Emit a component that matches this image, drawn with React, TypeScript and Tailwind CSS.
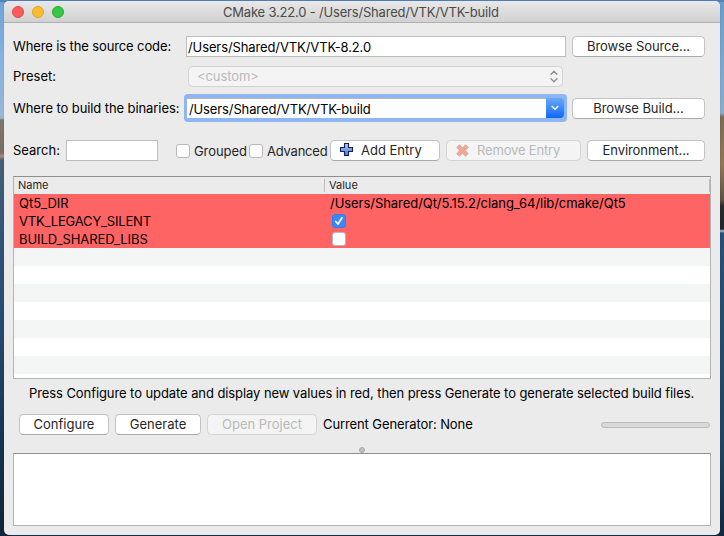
import React from "react";

function Button({ className, label, disabled, icon, track }: { className: string; label: string; disabled?: boolean; icon?: React.ReactNode; track: string }) {
  const look = disabled
    ? "bg-[#f4f4f4] border-[#d4d4d4] text-[#b9b9b9]"
    : "bg-white border-[#c3c3c3] border-b-[#a9a9a9] text-[#262626]";
  return (
    <button className={`flex h-[21px] shrink-0 items-center rounded-[4.5px] border pb-px ${icon ? "justify-start pl-[9px]" : "justify-center"} ${look} ${className}`}>
      {icon}
      <span className={track}>{label}</span>
    </button>
  );
}

function Check({ checked, className = "" }: { checked?: boolean; className?: string }) {
  return (
    <span className={`flex h-[14px] w-[14px] shrink-0 items-center justify-center rounded-[3px] border ${checked ? "border-[#2f7cf6] bg-[#3b87fc]" : "border-[#b9b9b9] bg-white"} ${className}`}>
      {checked && (
        <svg width="10" height="10" viewBox="0 0 10 10" fill="none" stroke="#fff" strokeWidth="1.7" strokeLinecap="round" strokeLinejoin="round">
          <path d="M1.8 5.5 L4 8 L8 1.8" />
        </svg>
      )}
    </span>
  );
}

const plus = (
  <svg className="mr-[7px] shrink-0" width="14" height="14" viewBox="0 0 14 14">
    <defs>
      <linearGradient id="plus" x1="0" y1="0" x2="0" y2="1">
        <stop offset="0" stopColor="#b5caf4" />
        <stop offset="1" stopColor="#4b76d6" />
      </linearGradient>
    </defs>
    <path d="M4.500 .5h4v4h4v4h-4v4h-4v-4h-4v-4h4z" fill="url(#plus)" stroke="#14235c" strokeWidth="1.1" />
  </svg>
);

const cross = (
  <svg className="mr-[7px] shrink-0" width="13" height="13" viewBox="0 0 13 13">
    <path d="M3.300 .8 6.500 3.700 9.700 .8 12.200 3.300 9.300 6.500 12.200 9.700 9.700 12.200 6.500 9.300 3.300 12.200 .8 9.700 3.700 6.500 .8 3.300z" fill="#f7a48e" stroke="#d6aea4" />
  </svg>
);

export default function App() {
  return (
    <div className="relative h-[536px] w-[724px] overflow-hidden bg-[#14304e] font-['Inter',sans-serif] text-[13px] leading-[16px] whitespace-nowrap text-black">
      <div className="absolute inset-y-0 left-0 w-[12px] bg-[linear-gradient(#6fa3d8_0px,#86b2df_60px,#98b7d6_118px,#7c756f_120px,#7b6b62_153px,#b08e78_156px,#48607a_160px,#2f5478_240px,#234a70_330px,#173654_430px,#0e2439_536px)]" />
      <div className="absolute inset-y-0 right-0 w-[12px] bg-[linear-gradient(#6a9bcc_0px,#7ba6d2_60px,#8aabcb_113px,#7c6a55_117px,#8e7558_165px,#5e5144_200px,#2a2b2e_206px,#20252c_229px,#b5c0c9_231px,#2b4f75_233px,#284b70_330px,#244260_450px,#12283e_536px)]" />
      <div className="absolute inset-x-0 top-0 h-[2px] bg-[#5284b9]" />

      <main className="relative ml-[4px] mt-[1px] flex h-[534px] w-[716px] flex-col overflow-hidden rounded-[5px] bg-[#ebebeb] shadow-[0_0_1px_#0006]">
        <header className="flex h-[22px] shrink-0 items-center border-b border-[#b0b0b0] bg-gradient-to-b from-[#e8e8e8] to-[#d1d1d1] pl-[8px]">
          <i className="mr-[8px] h-[12px] w-[12px] rounded-full border border-[#e2474a] bg-[#fc5a5c]" />
          <i className="mr-[8px] h-[12px] w-[12px] rounded-full border border-[#dfa023] bg-[#fdbc2f]" />
          <i className="h-[12px] w-[12px] rounded-full border border-[#27aa35] bg-[#34c943]" />
          <h1 className="ml-[159px] tracking-[-0.19px] text-[#4a4a4a]">CMake 3.22.0 - /Users/Shared/VTK/VTK-build</h1>
        </header>

        <section className="mt-[13px] flex h-[21px] shrink-0 items-center pl-[9px]">
          <label className="w-[173px] pb-px tracking-[-0.12px]">Where is the source code:</label>
          <div className="mr-[6px] flex h-[21px] w-[380px] items-center border border-[#bdbdbd] bg-white pl-px pt-px tracking-[-0.11px]">/Users/Shared/VTK/VTK-8.2.0</div>
          <Button className="w-[133px]" label="Browse Source..." track="tracking-[-0.08px]" />
        </section>

        <section className="mt-[9px] flex h-[21px] shrink-0 items-center pl-[9px]">
          <label className="w-[175px] pb-px">Preset:</label>
          <div className="flex h-[21px] w-[375px] items-center justify-between rounded-[4.5px] border border-[#d2d2d2] bg-[#f4f4f4] pb-px pl-[8px] pr-[4px] text-[#b9b9b9]">
            <span className="tracking-[-0.08px]">&lt;custom&gt;</span>
            <svg width="8" height="13" viewBox="0 0 8 13" fill="none" stroke="#8e8e8e" strokeWidth="1.3" strokeLinecap="round" strokeLinejoin="round"><path d="M1 4.300 4 1.300 7 4.300M1 8.700 4 11.700 7 8.700" /></svg>
          </div>
        </section>

        <section className="mt-[7px] flex h-[28px] shrink-0 items-start pl-[9px]">
          <label className="mt-[6px] w-[171px] tracking-[-0.09px]">Where to build the binaries:</label>
          <div className="mr-[5px] flex h-[28px] w-[383px] items-center rounded-[4px] bg-[#8eb6f0] p-[3px]">
            <div className="flex h-[20px] flex-1 items-center border-t border-[#b5b5b5] bg-white pl-[2px] tracking-[-0.12px]">/Users/Shared/VTK/VTK-build</div>
            <div className="flex h-[20px] w-[18px] items-center justify-center rounded-r-[4px] bg-gradient-to-b from-[#68a8fb] to-[#0b66fb]">
              <svg width="8" height="6" viewBox="0 0 8 6" fill="none" stroke="#fff" strokeWidth="1.5" strokeLinecap="round" strokeLinejoin="round"><path d="M1.200 1.500 4 4.300 6.800 1.500" /></svg>
            </div>
          </div>
          <Button className="mt-[4px] w-[133px]" label="Browse Build..." track="tracking-[-0.05px]" />
        </section>

        <section className="mt-[18px] flex h-[21px] shrink-0 items-center pl-[9px]">
          <label className="w-[53px] pb-px">Search:</label>
          <div className="h-[21px] w-[92px] border border-[#bdbdbd] bg-white" />
          <Check className="ml-[18px]" />
          <span className="ml-[4px] w-[55px] pt-px tracking-[-0.08px] text-[#262626]">Grouped</span>
          <Check />
          <span className="ml-[4px] w-[63px] pt-px tracking-[-0.22px] text-[#262626]">Advanced</span>
          <Button className="w-[110px]" label="Add Entry" icon={plus} track="" />
          <Button className="ml-[6px] w-[135px]" label="Remove Entry" icon={cross} disabled track="ml-px tracking-[-0.16px]" />
          <Button className="ml-[6px] w-[118px]" label="Environment..." track="tracking-[-0.08px]" />
        </section>

        <section className="mt-[15px] ml-[9px] flex h-[203px] w-[698px] shrink-0 flex-col overflow-hidden border border-[#b3b3b3] border-t-[#8e8e8e] bg-white">
          <div className="flex h-[17px] shrink-0 items-center bg-[#ebebeb] text-[11px] text-[#262626]">
            <span className="w-[310px] pb-px pl-[4px]">Name</span>
            <span className="h-[13px] w-px bg-[#bcbcbc]" />
            <span className="flex-1 pb-px pl-[4px]">Value</span>
            <span className="h-[13px] w-px bg-[#bcbcbc]" />
          </div>
          <div className="flex h-[18px] shrink-0 items-center bg-[#ff6464]"><span className="w-[316px] pl-[5px]">Qt5_DIR</span><span className="tracking-[-0.05px]">/Users/Shared/Qt/5.15.2/clang_64/lib/cmake/Qt5</span></div>
          <div className="flex h-[18px] shrink-0 items-center bg-[#ff6464]"><span className="w-[318px] pl-[5px] tracking-[-0.18px]">VTK_LEGACY_SILENT</span><Check checked /></div>
          <div className="flex h-[18px] shrink-0 items-center bg-[#ff6464]"><span className="w-[318px] pl-[5px] tracking-[-0.07px]">BUILD_SHARED_LIBS</span><Check /></div>
          {[0, 1, 2, 3, 4, 5, 6].map((n) => <div key={n} className="h-[18px] shrink-0 odd:bg-[#f4f5f5] even:bg-white" />)}
        </section>

        <p className="mt-[6px] ml-[25px] tracking-[-0.083px]">Press Configure to update and display new values in red, then press Generate to generate selected build files.</p>

        <section className="mt-[13px] flex h-[21px] shrink-0 items-center pl-[15px]">
          <Button className="w-[90px]" label="Configure" track="" />
          <Button className="ml-[6px] w-[86px]" label="Generate" track="" />
          <Button className="ml-[6px] w-[110px]" label="Open Project" disabled track="" />
          <span className="ml-[6px] w-[278px] pb-px tracking-[-0.1px]">Current Generator: None</span>
          <div className="h-[6px] w-[109px] rounded-full border border-[#bdbdbd] bg-[#d8d8d8]" />
        </section>

        <div className="mt-[12px] ml-[355px] h-[6px] w-[6px] shrink-0 rounded-full border border-[#aaa] bg-[#c0c0c0]" />
        <div className="ml-[9px] h-[73px] w-[698px] shrink-0 border border-[#b3b3b3] border-t-[#8e8e8e] bg-white" />
      </main>
    </div>
  );
}
